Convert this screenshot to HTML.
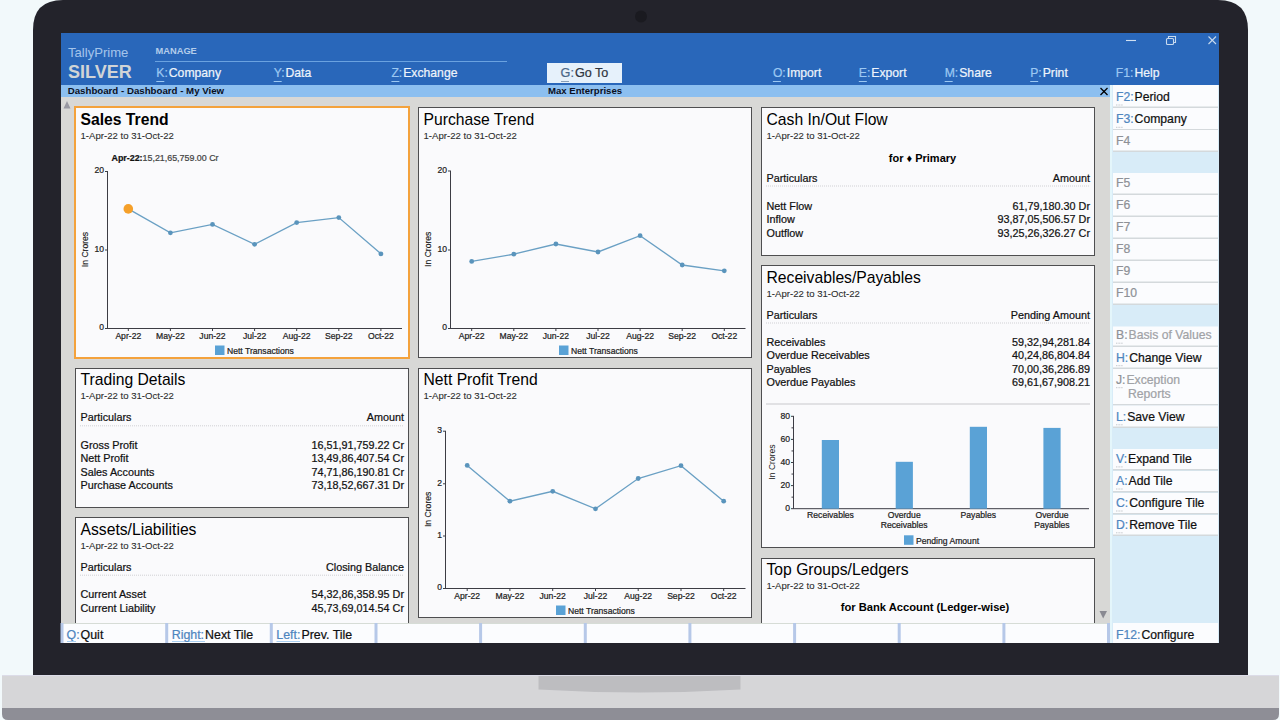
<!DOCTYPE html>
<html><head><meta charset="utf-8"><title>TallyPrime Dashboard</title>
<style>
html,body{margin:0;padding:0;width:1280px;height:720px;overflow:hidden;background:#f2f9fb;}
svg{display:block;font-family:"Liberation Sans",sans-serif;}
</style></head>
<body>
<svg width="1280" height="720" viewBox="0 0 1280 720">

<rect x="0" y="0" width="1280" height="720" fill="#f2f9fb"/>
<path d="M33 675 L33 30 Q33 0 63 0 L1218 0 Q1248 0 1248 30 L1248 675 Z" fill="#23232b"/>
<circle cx="641" cy="16.5" r="6" fill="#1a1a20"/>
<rect x="2" y="675" width="1277" height="33" fill="#d6d6d8" />
<rect x="2" y="675" width="1277" height="1" fill="#dcdce8" />
<path d="M538.5 676 L740.5 676 L740.5 689.5 Q639.5 695.5 538.5 689.5 Z" fill="#bdbdc0"/>
<path d="M2 708 L1279 708 L1279 714 Q1279 720 1273 720 L8 720 Q2 720 2 714 Z" fill="#8e8e96"/>
<rect x="61" y="33" width="1158" height="52" fill="#2967ba" />
<text x="68" y="57" font-size="13.1" fill="#a4c4ea" stroke="#a4c4ea" stroke-width="0.05" >TallyPrime</text>
<text x="68" y="77.5" font-size="18" fill="#d0d4d6" font-weight="bold" >SILVER</text>
<text x="155.5" y="54" font-size="9.3" fill="#b4cdea" font-weight="bold" >MANAGE</text>
<line x1="155" y1="61.5" x2="507" y2="61.5" stroke="#6aa2e0" stroke-width="1.2" />
<text x="156.3" y="77.1" font-size="12.2"><tspan fill="#9cc8f2" stroke="#9cc8f2" stroke-width="0.22">K:</tspan><tspan fill="#eef4fb" stroke="#eef4fb" stroke-width="0.22" dx="1.0">Company</tspan></text>
<line x1="156.3" y1="81.5" x2="164.3" y2="81.5" stroke="#9cc8f2" stroke-width="1" />
<text x="273.7" y="77.1" font-size="12.2"><tspan fill="#9cc8f2" stroke="#9cc8f2" stroke-width="0.22">Y:</tspan><tspan fill="#eef4fb" stroke="#eef4fb" stroke-width="0.22" dx="1.0">Data</tspan></text>
<line x1="273.7" y1="81.5" x2="281.7" y2="81.5" stroke="#9cc8f2" stroke-width="1" />
<text x="391.4" y="77.1" font-size="12.2"><tspan fill="#9cc8f2" stroke="#9cc8f2" stroke-width="0.22">Z:</tspan><tspan fill="#eef4fb" stroke="#eef4fb" stroke-width="0.22" dx="1.0">Exchange</tspan></text>
<line x1="391.4" y1="81.5" x2="399.4" y2="81.5" stroke="#9cc8f2" stroke-width="1" />
<text x="772.9" y="77.1" font-size="12.2"><tspan fill="#9cc8f2" stroke="#9cc8f2" stroke-width="0.22">O:</tspan><tspan fill="#eef4fb" stroke="#eef4fb" stroke-width="0.22" dx="1.0">Import</tspan></text>
<line x1="772.9" y1="81.5" x2="780.9" y2="81.5" stroke="#9cc8f2" stroke-width="1" />
<text x="858.8" y="77.1" font-size="12.2"><tspan fill="#9cc8f2" stroke="#9cc8f2" stroke-width="0.22">E:</tspan><tspan fill="#eef4fb" stroke="#eef4fb" stroke-width="0.22" dx="1.0">Export</tspan></text>
<line x1="858.8" y1="81.5" x2="866.8" y2="81.5" stroke="#9cc8f2" stroke-width="1" />
<text x="944.7" y="77.1" font-size="12.2"><tspan fill="#9cc8f2" stroke="#9cc8f2" stroke-width="0.22">M:</tspan><tspan fill="#eef4fb" stroke="#eef4fb" stroke-width="0.22" dx="1.0">Share</tspan></text>
<line x1="944.7" y1="81.5" x2="952.7" y2="81.5" stroke="#9cc8f2" stroke-width="1" />
<text x="1030.2" y="77.1" font-size="12.2"><tspan fill="#9cc8f2" stroke="#9cc8f2" stroke-width="0.22">P:</tspan><tspan fill="#eef4fb" stroke="#eef4fb" stroke-width="0.22" dx="1.0">Print</tspan></text>
<line x1="1030.2" y1="81.5" x2="1038.2" y2="81.5" stroke="#9cc8f2" stroke-width="1" />
<text x="1115.8" y="77.1" font-size="12.2"><tspan fill="#9cc8f2" stroke="#9cc8f2" stroke-width="0.22">F1:</tspan><tspan fill="#eef4fb" stroke="#eef4fb" stroke-width="0.22" dx="1.0">Help</tspan></text>
<rect x="547" y="63" width="75" height="20" fill="#e6f1fb" />
<text x="560.6" y="77" font-size="12.6"><tspan fill="#4a6688" stroke="#4a6688" stroke-width="0.22">G:</tspan><tspan fill="#2e3440" stroke="#2e3440" stroke-width="0.22" dx="1.0">Go To</tspan></text>
<line x1="561" y1="81.5" x2="569" y2="81.5" stroke="#8aa0b8" stroke-width="1" />
<line x1="1126" y1="40.5" x2="1136" y2="40.5" stroke="#d0e0f2" stroke-width="1.1" />
<rect x="1166.5" y="38.5" width="7" height="6" rx="1" fill="none" stroke="#c8daee" stroke-width="1.1"/>
<path d="M1168.5 38.5 V36.5 H1175.5 V42.5 H1173.5" fill="none" stroke="#c8daee" stroke-width="1.1"/>
<line x1="1208.5" y1="36.5" x2="1216" y2="44" stroke="#c8daee" stroke-width="1.1" />
<line x1="1216" y1="36.5" x2="1208.5" y2="44" stroke="#c8daee" stroke-width="1.1" />
<rect x="61" y="85" width="1049" height="12" fill="#8cbff0" />
<text x="67.7" y="94" font-size="9.7" fill="#0a0f1e" font-weight="bold" >Dashboard - Dashboard - My View</text>
<text x="548" y="93.8" font-size="9.6" fill="#0a0f1e" font-weight="bold" >Max Enterprises</text>
<line x1="1100.5" y1="88" x2="1107.5" y2="95" stroke="#000" stroke-width="1.2" />
<line x1="1107.5" y1="88" x2="1100.5" y2="95" stroke="#000" stroke-width="1.2" />
<rect x="61" y="97" width="1049" height="526" fill="#d8d8d6" />
<path d="M67 101 L70.5 108.5 L63.5 108.5 Z" fill="#9898a2"/>
<path d="M1099.5 611 L1107 611 L1103.2 618.5 Z" fill="#8a8a92"/>
<rect x="1110" y="85" width="109" height="558" fill="#d8ecf8" />
<rect x="1110" y="85" width="2" height="558" fill="#e4f6fb" />
<rect x="1113" y="85" width="105" height="22" fill="#fbfcfe" />
<rect x="1113" y="106.5" width="105" height="1.5" fill="#d4d9dc" />
<text x="1116" y="101" font-size="12.2"><tspan fill="#4f86be" stroke="#4f86be" stroke-width="0.22">F2:</tspan><tspan fill="#101010" stroke="#101010" stroke-width="0.22" dx="1">Period</tspan></text>
<line x1="1116" y1="105" x2="1123" y2="105" stroke="#c4c8cc" stroke-width="1" stroke-dasharray="1 0.6"/>
<rect x="1113" y="108" width="105" height="21.5" fill="#fbfcfe" />
<rect x="1113" y="129.0" width="105" height="1.5" fill="#d4d9dc" />
<text x="1116" y="123.3" font-size="12.2"><tspan fill="#4f86be" stroke="#4f86be" stroke-width="0.22">F3:</tspan><tspan fill="#101010" stroke="#101010" stroke-width="0.22" dx="1">Company</tspan></text>
<line x1="1116" y1="127.3" x2="1123" y2="127.3" stroke="#c4c8cc" stroke-width="1" stroke-dasharray="1 0.6"/>
<rect x="1113" y="130" width="105" height="21" fill="#fbfcfe" />
<rect x="1113" y="150.5" width="105" height="1.5" fill="#d4d9dc" />
<text x="1116" y="145" font-size="12.2" fill="#8e9196" stroke="#8e9196" stroke-width="0.22" >F4</text>
<rect x="1113" y="173" width="105" height="21" fill="#fbfcfe" />
<rect x="1113" y="193.5" width="105" height="1.5" fill="#d4d9dc" />
<text x="1116" y="187.1" font-size="12.2" fill="#8e9196" stroke="#8e9196" stroke-width="0.22" >F5</text>
<rect x="1113" y="195" width="105" height="21" fill="#fbfcfe" />
<rect x="1113" y="215.5" width="105" height="1.5" fill="#d4d9dc" />
<text x="1116" y="209.1" font-size="12.2" fill="#8e9196" stroke="#8e9196" stroke-width="0.22" >F6</text>
<rect x="1113" y="217" width="105" height="21" fill="#fbfcfe" />
<rect x="1113" y="237.5" width="105" height="1.5" fill="#d4d9dc" />
<text x="1116" y="231.1" font-size="12.2" fill="#8e9196" stroke="#8e9196" stroke-width="0.22" >F7</text>
<rect x="1113" y="239" width="105" height="21" fill="#fbfcfe" />
<rect x="1113" y="259.5" width="105" height="1.5" fill="#d4d9dc" />
<text x="1116" y="253.1" font-size="12.2" fill="#8e9196" stroke="#8e9196" stroke-width="0.22" >F8</text>
<rect x="1113" y="261" width="105" height="21" fill="#fbfcfe" />
<rect x="1113" y="281.5" width="105" height="1.5" fill="#d4d9dc" />
<text x="1116" y="275.1" font-size="12.2" fill="#8e9196" stroke="#8e9196" stroke-width="0.22" >F9</text>
<rect x="1113" y="283" width="105" height="21" fill="#fbfcfe" />
<rect x="1113" y="303.5" width="105" height="1.5" fill="#d4d9dc" />
<text x="1116" y="297.1" font-size="12.2" fill="#8e9196" stroke="#8e9196" stroke-width="0.22" >F10</text>
<rect x="1113" y="326.5" width="105" height="19.5" fill="#fbfcfe" />
<rect x="1113" y="345.5" width="105" height="1.5" fill="#d4d9dc" />
<text x="1116" y="339.2" font-size="12.2"><tspan fill="#8e9196" stroke="#8e9196" stroke-width="0.22">B:</tspan><tspan fill="#a0a2a6" stroke="#a0a2a6" stroke-width="0.22" dx="1">Basis of Values</tspan></text>
<line x1="1116" y1="343.2" x2="1123" y2="343.2" stroke="#c4c8cc" stroke-width="1" stroke-dasharray="1 0.6"/>
<rect x="1113" y="347" width="105" height="21" fill="#fbfcfe" />
<rect x="1113" y="367.5" width="105" height="1.5" fill="#d4d9dc" />
<text x="1116" y="361.7" font-size="12.2"><tspan fill="#4f86be" stroke="#4f86be" stroke-width="0.22">H:</tspan><tspan fill="#101010" stroke="#101010" stroke-width="0.22" dx="1">Change View</tspan></text>
<line x1="1116" y1="365.7" x2="1123" y2="365.7" stroke="#c4c8cc" stroke-width="1" stroke-dasharray="1 0.6"/>
<rect x="1113" y="369" width="105" height="35.5" fill="#fbfcfe" />
<rect x="1113" y="404.0" width="105" height="1.5" fill="#d4d9dc" />
<text x="1116" y="383.7" font-size="12.2"><tspan fill="#8e9196" stroke="#8e9196" stroke-width="0.22">J:</tspan><tspan fill="#a0a2a6" stroke="#a0a2a6" stroke-width="0.22" dx="1">Exception</tspan></text>
<text x="1128" y="398.0" font-size="12.2" fill="#a0a2a6" stroke="#a0a2a6" stroke-width="0.22" >Reports</text>
<line x1="1116" y1="387.7" x2="1123" y2="387.7" stroke="#c4c8cc" stroke-width="1" stroke-dasharray="1 0.6"/>
<rect x="1113" y="405.5" width="105" height="21.5" fill="#fbfcfe" />
<rect x="1113" y="426.5" width="105" height="1.5" fill="#d4d9dc" />
<text x="1116" y="420.8" font-size="12.2"><tspan fill="#4f86be" stroke="#4f86be" stroke-width="0.22">L:</tspan><tspan fill="#101010" stroke="#101010" stroke-width="0.22" dx="1">Save View</tspan></text>
<line x1="1116" y1="424.8" x2="1123" y2="424.8" stroke="#c4c8cc" stroke-width="1" stroke-dasharray="1 0.6"/>
<rect x="1113" y="449" width="105" height="20.5" fill="#fbfcfe" />
<rect x="1113" y="469.0" width="105" height="1.5" fill="#d4d9dc" />
<text x="1116" y="462.9" font-size="12.2"><tspan fill="#4f86be" stroke="#4f86be" stroke-width="0.22">V:</tspan><tspan fill="#101010" stroke="#101010" stroke-width="0.22" dx="1">Expand Tile</tspan></text>
<line x1="1116" y1="466.9" x2="1123" y2="466.9" stroke="#c4c8cc" stroke-width="1" stroke-dasharray="1 0.6"/>
<rect x="1113" y="471" width="105" height="20.5" fill="#fbfcfe" />
<rect x="1113" y="491.0" width="105" height="1.5" fill="#d4d9dc" />
<text x="1116" y="485" font-size="12.2"><tspan fill="#4f86be" stroke="#4f86be" stroke-width="0.22">A:</tspan><tspan fill="#101010" stroke="#101010" stroke-width="0.22" dx="1">Add Tile</tspan></text>
<line x1="1116" y1="489" x2="1123" y2="489" stroke="#c4c8cc" stroke-width="1" stroke-dasharray="1 0.6"/>
<rect x="1113" y="493" width="105" height="20.5" fill="#fbfcfe" />
<rect x="1113" y="513.0" width="105" height="1.5" fill="#d4d9dc" />
<text x="1116" y="507" font-size="12.2"><tspan fill="#4f86be" stroke="#4f86be" stroke-width="0.22">C:</tspan><tspan fill="#101010" stroke="#101010" stroke-width="0.22" dx="1">Configure Tile</tspan></text>
<line x1="1116" y1="511" x2="1123" y2="511" stroke="#c4c8cc" stroke-width="1" stroke-dasharray="1 0.6"/>
<rect x="1113" y="515" width="105" height="20" fill="#fbfcfe" />
<rect x="1113" y="534.5" width="105" height="1.5" fill="#d4d9dc" />
<text x="1116" y="528.8" font-size="12.2"><tspan fill="#4f86be" stroke="#4f86be" stroke-width="0.22">D:</tspan><tspan fill="#101010" stroke="#101010" stroke-width="0.22" dx="1">Remove Tile</tspan></text>
<line x1="1116" y1="532.8" x2="1123" y2="532.8" stroke="#c4c8cc" stroke-width="1" stroke-dasharray="1 0.6"/>
<rect x="1113" y="623" width="105" height="20" fill="#fbfcfe" />
<text x="1116" y="638.8" font-size="12.2"><tspan fill="#4f86be" stroke="#4f86be" stroke-width="0.22">F12:</tspan><tspan fill="#101010" stroke="#101010" stroke-width="0.22" dx="1">Configure</tspan></text>
<rect x="75.5" y="107.5" width="333" height="250" fill="#fafafc" stroke="#4e4e50" stroke-width="1"/>
<text x="80.5" y="125.3" font-size="15.7" fill="#000" font-weight="bold" >Sales Trend</text>
<text x="80.5" y="139" font-size="9.6" fill="#2a2a2a" stroke="#2a2a2a" stroke-width="0.08" >1-Apr-22 to 31-Oct-22</text>
<rect x="75" y="107" width="334" height="251" fill="none" stroke="#f4a23c" stroke-width="2"/>
<rect x="418.5" y="107.5" width="333" height="250" fill="#fafafc" stroke="#4e4e50" stroke-width="1"/>
<text x="423.5" y="125.3" font-size="15.7" fill="#000" >Purchase Trend</text>
<text x="423.5" y="139" font-size="9.6" fill="#2a2a2a" stroke="#2a2a2a" stroke-width="0.08" >1-Apr-22 to 31-Oct-22</text>
<rect x="761.5" y="107.5" width="333" height="148" fill="#fafafc" stroke="#4e4e50" stroke-width="1"/>
<text x="766.5" y="125.3" font-size="15.7" fill="#000" >Cash In/Out Flow</text>
<text x="766.5" y="139" font-size="9.6" fill="#2a2a2a" stroke="#2a2a2a" stroke-width="0.08" >1-Apr-22 to 31-Oct-22</text>
<text x="922.5" y="161.5" font-size="11" fill="#000" font-weight="bold" text-anchor="middle" >for &#9830; Primary</text>
<text x="766.5" y="182.2" font-size="10.8" fill="#111" stroke="#111" stroke-width="0.22" >Particulars</text>
<text x="1090" y="182.2" font-size="10.8" fill="#111" stroke="#111" stroke-width="0.22" text-anchor="end" >Amount</text>
<line x1="766" y1="186.0" x2="1090" y2="186.0" stroke="#d0d0d4" stroke-width="1" stroke-dasharray="1 1"/>
<text x="766.5" y="210.0" font-size="10.8" fill="#111" stroke="#111" stroke-width="0.22" >Nett Flow</text>
<text x="1090" y="210.0" font-size="10.8" fill="#111" stroke="#111" stroke-width="0.22" text-anchor="end" >61,79,180.30 Dr</text>
<text x="766.5" y="223.45" font-size="10.8" fill="#111" stroke="#111" stroke-width="0.22" >Inflow</text>
<text x="1090" y="223.45" font-size="10.8" fill="#111" stroke="#111" stroke-width="0.22" text-anchor="end" >93,87,05,506.57 Dr</text>
<text x="766.5" y="236.9" font-size="10.8" fill="#111" stroke="#111" stroke-width="0.22" >Outflow</text>
<text x="1090" y="236.9" font-size="10.8" fill="#111" stroke="#111" stroke-width="0.22" text-anchor="end" >93,25,26,326.27 Cr</text>
<rect x="75.5" y="368.5" width="333" height="139" fill="#fafafc" stroke="#4e4e50" stroke-width="1"/>
<text x="80.5" y="385.3" font-size="15.7" fill="#000" >Trading Details</text>
<text x="80.5" y="399" font-size="9.6" fill="#2a2a2a" stroke="#2a2a2a" stroke-width="0.08" >1-Apr-22 to 31-Oct-22</text>
<text x="80.5" y="421.3" font-size="10.8" fill="#111" stroke="#111" stroke-width="0.22" >Particulars</text>
<text x="404" y="421.3" font-size="10.8" fill="#111" stroke="#111" stroke-width="0.22" text-anchor="end" >Amount</text>
<line x1="80" y1="425.8" x2="404" y2="425.8" stroke="#d0d0d4" stroke-width="1" stroke-dasharray="1 1"/>
<text x="80.5" y="448.8" font-size="10.8" fill="#111" stroke="#111" stroke-width="0.22" >Gross Profit</text>
<text x="404" y="448.8" font-size="10.8" fill="#111" stroke="#111" stroke-width="0.22" text-anchor="end" >16,51,91,759.22 Cr</text>
<text x="80.5" y="462.25" font-size="10.8" fill="#111" stroke="#111" stroke-width="0.22" >Nett Profit</text>
<text x="404" y="462.25" font-size="10.8" fill="#111" stroke="#111" stroke-width="0.22" text-anchor="end" >13,49,86,407.54 Cr</text>
<text x="80.5" y="475.7" font-size="10.8" fill="#111" stroke="#111" stroke-width="0.22" >Sales Accounts</text>
<text x="404" y="475.7" font-size="10.8" fill="#111" stroke="#111" stroke-width="0.22" text-anchor="end" >74,71,86,190.81 Cr</text>
<text x="80.5" y="489.15" font-size="10.8" fill="#111" stroke="#111" stroke-width="0.22" >Purchase Accounts</text>
<text x="404" y="489.15" font-size="10.8" fill="#111" stroke="#111" stroke-width="0.22" text-anchor="end" >73,18,52,667.31 Dr</text>
<rect x="418.5" y="368.5" width="333" height="249" fill="#fafafc" stroke="#4e4e50" stroke-width="1"/>
<text x="423.5" y="385.3" font-size="15.7" fill="#000" >Nett Profit Trend</text>
<text x="423.5" y="399" font-size="9.6" fill="#2a2a2a" stroke="#2a2a2a" stroke-width="0.08" >1-Apr-22 to 31-Oct-22</text>
<rect x="761.5" y="265.5" width="333" height="282" fill="#fafafc" stroke="#4e4e50" stroke-width="1"/>
<text x="766.5" y="283.3" font-size="15.7" fill="#000" >Receivables/Payables</text>
<text x="766.5" y="297" font-size="9.6" fill="#2a2a2a" stroke="#2a2a2a" stroke-width="0.08" >1-Apr-22 to 31-Oct-22</text>
<text x="766.5" y="318.8" font-size="10.8" fill="#111" stroke="#111" stroke-width="0.22" >Particulars</text>
<text x="1090" y="318.8" font-size="10.8" fill="#111" stroke="#111" stroke-width="0.22" text-anchor="end" >Pending Amount</text>
<line x1="766" y1="323.0" x2="1090" y2="323.0" stroke="#d0d0d4" stroke-width="1" stroke-dasharray="1 1"/>
<text x="766.5" y="345.9" font-size="10.8" fill="#111" stroke="#111" stroke-width="0.22" >Receivables</text>
<text x="1090" y="345.9" font-size="10.8" fill="#111" stroke="#111" stroke-width="0.22" text-anchor="end" >59,32,94,281.84</text>
<text x="766.5" y="359.35" font-size="10.8" fill="#111" stroke="#111" stroke-width="0.22" >Overdue Receivables</text>
<text x="1090" y="359.35" font-size="10.8" fill="#111" stroke="#111" stroke-width="0.22" text-anchor="end" >40,24,86,804.84</text>
<text x="766.5" y="372.8" font-size="10.8" fill="#111" stroke="#111" stroke-width="0.22" >Payables</text>
<text x="1090" y="372.8" font-size="10.8" fill="#111" stroke="#111" stroke-width="0.22" text-anchor="end" >70,00,36,286.89</text>
<text x="766.5" y="386.25" font-size="10.8" fill="#111" stroke="#111" stroke-width="0.22" >Overdue Payables</text>
<text x="1090" y="386.25" font-size="10.8" fill="#111" stroke="#111" stroke-width="0.22" text-anchor="end" >69,61,67,908.21</text>
<line x1="766" y1="404" x2="1090" y2="404" stroke="#c8c8cc" stroke-width="1" />
<rect x="75.5" y="517.5" width="333" height="122" fill="#fafafc" stroke="#4e4e50" stroke-width="1"/>
<text x="80.5" y="535.3" font-size="15.7" fill="#000" >Assets/Liabilities</text>
<text x="80.5" y="549" font-size="9.6" fill="#2a2a2a" stroke="#2a2a2a" stroke-width="0.08" >1-Apr-22 to 31-Oct-22</text>
<text x="80.5" y="570.6" font-size="10.8" fill="#111" stroke="#111" stroke-width="0.22" >Particulars</text>
<text x="404" y="570.6" font-size="10.8" fill="#111" stroke="#111" stroke-width="0.22" text-anchor="end" >Closing Balance</text>
<line x1="80" y1="575.2" x2="404" y2="575.2" stroke="#d0d0d4" stroke-width="1" stroke-dasharray="1 1"/>
<text x="80.5" y="598.4" font-size="10.8" fill="#111" stroke="#111" stroke-width="0.22" >Current Asset</text>
<text x="404" y="598.4" font-size="10.8" fill="#111" stroke="#111" stroke-width="0.22" text-anchor="end" >54,32,86,358.95 Dr</text>
<text x="80.5" y="611.85" font-size="10.8" fill="#111" stroke="#111" stroke-width="0.22" >Current Liability</text>
<text x="404" y="611.85" font-size="10.8" fill="#111" stroke="#111" stroke-width="0.22" text-anchor="end" >45,73,69,014.54 Cr</text>
<rect x="761.5" y="558.5" width="333" height="81" fill="#fafafc" stroke="#4e4e50" stroke-width="1"/>
<text x="766.5" y="575.3" font-size="15.7" fill="#000" >Top Groups/Ledgers</text>
<text x="766.5" y="589" font-size="9.6" fill="#2a2a2a" stroke="#2a2a2a" stroke-width="0.08" >1-Apr-22 to 31-Oct-22</text>
<text x="925" y="611.1" font-size="11.2" fill="#000" font-weight="bold" text-anchor="middle" >for Bank Account (Ledger-wise)</text>
<line x1="107.5" y1="171" x2="107.5" y2="328.5" stroke="#3c3c44" stroke-width="1" />
<line x1="107" y1="328.5" x2="402" y2="328.5" stroke="#3c3c44" stroke-width="1" />
<line x1="105" y1="171.5" x2="107" y2="171.5" stroke="#3c3c44" stroke-width="1" />
<text x="104" y="173.4" font-size="8.6" fill="#222" stroke="#222" stroke-width="0.22" text-anchor="end" >20</text>
<line x1="105" y1="250.0" x2="107" y2="250.0" stroke="#3c3c44" stroke-width="1" />
<text x="104" y="251.9" font-size="8.6" fill="#222" stroke="#222" stroke-width="0.22" text-anchor="end" >10</text>
<line x1="105" y1="328.5" x2="107" y2="328.5" stroke="#3c3c44" stroke-width="1" />
<text x="104" y="330.4" font-size="8.6" fill="#222" stroke="#222" stroke-width="0.22" text-anchor="end" >0</text>
<line x1="128.3" y1="328.5" x2="128.3" y2="331" stroke="#3c3c44" stroke-width="1" />
<text x="128.3" y="338.6" font-size="8.6" fill="#222" stroke="#222" stroke-width="0.22" text-anchor="middle" >Apr-22</text>
<line x1="170.4" y1="328.5" x2="170.4" y2="331" stroke="#3c3c44" stroke-width="1" />
<text x="170.4" y="338.6" font-size="8.6" fill="#222" stroke="#222" stroke-width="0.22" text-anchor="middle" >May-22</text>
<line x1="212.5" y1="328.5" x2="212.5" y2="331" stroke="#3c3c44" stroke-width="1" />
<text x="212.5" y="338.6" font-size="8.6" fill="#222" stroke="#222" stroke-width="0.22" text-anchor="middle" >Jun-22</text>
<line x1="254.6" y1="328.5" x2="254.6" y2="331" stroke="#3c3c44" stroke-width="1" />
<text x="254.6" y="338.6" font-size="8.6" fill="#222" stroke="#222" stroke-width="0.22" text-anchor="middle" >Jul-22</text>
<line x1="296.7" y1="328.5" x2="296.7" y2="331" stroke="#3c3c44" stroke-width="1" />
<text x="296.7" y="338.6" font-size="8.6" fill="#222" stroke="#222" stroke-width="0.22" text-anchor="middle" >Aug-22</text>
<line x1="338.8" y1="328.5" x2="338.8" y2="331" stroke="#3c3c44" stroke-width="1" />
<text x="338.8" y="338.6" font-size="8.6" fill="#222" stroke="#222" stroke-width="0.22" text-anchor="middle" >Sep-22</text>
<line x1="380.9" y1="328.5" x2="380.9" y2="331" stroke="#3c3c44" stroke-width="1" />
<text x="380.9" y="338.6" font-size="8.6" fill="#222" stroke="#222" stroke-width="0.22" text-anchor="middle" >Oct-22</text>
<polyline points="128.3,208.9 170.4,232.8 212.5,224.4 254.6,244.3 296.7,222.6 338.8,217.6 380.9,253.8" fill="none" stroke="#6aa0c4" stroke-width="1.35"/>
<circle cx="128.3" cy="208.9" r="4.8" fill="#f5a02a"/>
<circle cx="170.4" cy="232.8" r="2.4" fill="#5a94bc"/>
<circle cx="212.5" cy="224.4" r="2.4" fill="#5a94bc"/>
<circle cx="254.6" cy="244.3" r="2.4" fill="#5a94bc"/>
<circle cx="296.7" cy="222.6" r="2.4" fill="#5a94bc"/>
<circle cx="338.8" cy="217.6" r="2.4" fill="#5a94bc"/>
<circle cx="380.9" cy="253.8" r="2.4" fill="#5a94bc"/>
<text x="0" y="0" font-size="8.6" fill="#222" stroke="#222" stroke-width="0.15" text-anchor="middle" transform="translate(87.5,249.5) rotate(-90)">In Crores</text>
<rect x="215" y="345.5" width="9.5" height="9.5" fill="#5aa2d6" />
<text x="227" y="353.8" font-size="8.6" fill="#222" stroke="#222" stroke-width="0.22" >Nett Transactions</text>
<text x="111.5" y="160.5" font-size="8.9" fill="#111" stroke="#111" stroke-width="0.22" ><tspan font-weight="bold">Apr-22:</tspan><tspan fill="#444" stroke="#444">15,21,65,759.00 Cr</tspan></text>
<line x1="450.5" y1="170.5" x2="450.5" y2="328.5" stroke="#3c3c44" stroke-width="1" />
<line x1="450" y1="328.5" x2="745.5" y2="328.5" stroke="#3c3c44" stroke-width="1" />
<line x1="448" y1="171.0" x2="450" y2="171.0" stroke="#3c3c44" stroke-width="1" />
<text x="447" y="172.9" font-size="8.6" fill="#222" stroke="#222" stroke-width="0.22" text-anchor="end" >20</text>
<line x1="448" y1="250.0" x2="450" y2="250.0" stroke="#3c3c44" stroke-width="1" />
<text x="447" y="251.9" font-size="8.6" fill="#222" stroke="#222" stroke-width="0.22" text-anchor="end" >10</text>
<line x1="448" y1="328.5" x2="450" y2="328.5" stroke="#3c3c44" stroke-width="1" />
<text x="447" y="330.4" font-size="8.6" fill="#222" stroke="#222" stroke-width="0.22" text-anchor="end" >0</text>
<line x1="471.7" y1="328.5" x2="471.7" y2="331" stroke="#3c3c44" stroke-width="1" />
<text x="471.7" y="338.6" font-size="8.6" fill="#222" stroke="#222" stroke-width="0.22" text-anchor="middle" >Apr-22</text>
<line x1="513.8" y1="328.5" x2="513.8" y2="331" stroke="#3c3c44" stroke-width="1" />
<text x="513.8" y="338.6" font-size="8.6" fill="#222" stroke="#222" stroke-width="0.22" text-anchor="middle" >May-22</text>
<line x1="555.9" y1="328.5" x2="555.9" y2="331" stroke="#3c3c44" stroke-width="1" />
<text x="555.9" y="338.6" font-size="8.6" fill="#222" stroke="#222" stroke-width="0.22" text-anchor="middle" >Jun-22</text>
<line x1="598.0" y1="328.5" x2="598.0" y2="331" stroke="#3c3c44" stroke-width="1" />
<text x="598.0" y="338.6" font-size="8.6" fill="#222" stroke="#222" stroke-width="0.22" text-anchor="middle" >Jul-22</text>
<line x1="640.1" y1="328.5" x2="640.1" y2="331" stroke="#3c3c44" stroke-width="1" />
<text x="640.1" y="338.6" font-size="8.6" fill="#222" stroke="#222" stroke-width="0.22" text-anchor="middle" >Aug-22</text>
<line x1="682.2" y1="328.5" x2="682.2" y2="331" stroke="#3c3c44" stroke-width="1" />
<text x="682.2" y="338.6" font-size="8.6" fill="#222" stroke="#222" stroke-width="0.22" text-anchor="middle" >Sep-22</text>
<line x1="724.3" y1="328.5" x2="724.3" y2="331" stroke="#3c3c44" stroke-width="1" />
<text x="724.3" y="338.6" font-size="8.6" fill="#222" stroke="#222" stroke-width="0.22" text-anchor="middle" >Oct-22</text>
<polyline points="471.7,261.4 513.8,254.2 555.9,244 598.0,252 640.1,235.7 682.2,265 724.3,270.8" fill="none" stroke="#6aa0c4" stroke-width="1.35"/>
<circle cx="471.7" cy="261.4" r="2.4" fill="#5a94bc"/>
<circle cx="513.8" cy="254.2" r="2.4" fill="#5a94bc"/>
<circle cx="555.9" cy="244" r="2.4" fill="#5a94bc"/>
<circle cx="598.0" cy="252" r="2.4" fill="#5a94bc"/>
<circle cx="640.1" cy="235.7" r="2.4" fill="#5a94bc"/>
<circle cx="682.2" cy="265" r="2.4" fill="#5a94bc"/>
<circle cx="724.3" cy="270.8" r="2.4" fill="#5a94bc"/>
<text x="0" y="0" font-size="8.6" fill="#222" stroke="#222" stroke-width="0.15" text-anchor="middle" transform="translate(430.5,249.25) rotate(-90)">In Crores</text>
<rect x="559" y="345.5" width="9.5" height="9.5" fill="#5aa2d6" />
<text x="571" y="353.8" font-size="8.6" fill="#222" stroke="#222" stroke-width="0.22" >Nett Transactions</text>
<line x1="445.5" y1="430.7" x2="445.5" y2="588.5" stroke="#3c3c44" stroke-width="1" />
<line x1="445" y1="588.5" x2="745.5" y2="588.5" stroke="#3c3c44" stroke-width="1" />
<line x1="443" y1="431.2" x2="445" y2="431.2" stroke="#3c3c44" stroke-width="1" />
<text x="442" y="433.09999999999997" font-size="8.6" fill="#222" stroke="#222" stroke-width="0.22" text-anchor="end" >3</text>
<line x1="443" y1="483.8" x2="445" y2="483.8" stroke="#3c3c44" stroke-width="1" />
<text x="442" y="485.7" font-size="8.6" fill="#222" stroke="#222" stroke-width="0.22" text-anchor="end" >2</text>
<line x1="443" y1="536.0" x2="445" y2="536.0" stroke="#3c3c44" stroke-width="1" />
<text x="442" y="537.9" font-size="8.6" fill="#222" stroke="#222" stroke-width="0.22" text-anchor="end" >1</text>
<line x1="443" y1="588.5" x2="445" y2="588.5" stroke="#3c3c44" stroke-width="1" />
<text x="442" y="590.4" font-size="8.6" fill="#222" stroke="#222" stroke-width="0.22" text-anchor="end" >0</text>
<line x1="467.2" y1="588.5" x2="467.2" y2="591" stroke="#3c3c44" stroke-width="1" />
<text x="467.2" y="598.6" font-size="8.6" fill="#222" stroke="#222" stroke-width="0.22" text-anchor="middle" >Apr-22</text>
<line x1="509.9" y1="588.5" x2="509.9" y2="591" stroke="#3c3c44" stroke-width="1" />
<text x="509.9" y="598.6" font-size="8.6" fill="#222" stroke="#222" stroke-width="0.22" text-anchor="middle" >May-22</text>
<line x1="552.7" y1="588.5" x2="552.7" y2="591" stroke="#3c3c44" stroke-width="1" />
<text x="552.7" y="598.6" font-size="8.6" fill="#222" stroke="#222" stroke-width="0.22" text-anchor="middle" >Jun-22</text>
<line x1="595.5" y1="588.5" x2="595.5" y2="591" stroke="#3c3c44" stroke-width="1" />
<text x="595.5" y="598.6" font-size="8.6" fill="#222" stroke="#222" stroke-width="0.22" text-anchor="middle" >Jul-22</text>
<line x1="638.2" y1="588.5" x2="638.2" y2="591" stroke="#3c3c44" stroke-width="1" />
<text x="638.2" y="598.6" font-size="8.6" fill="#222" stroke="#222" stroke-width="0.22" text-anchor="middle" >Aug-22</text>
<line x1="681.0" y1="588.5" x2="681.0" y2="591" stroke="#3c3c44" stroke-width="1" />
<text x="681.0" y="598.6" font-size="8.6" fill="#222" stroke="#222" stroke-width="0.22" text-anchor="middle" >Sep-22</text>
<line x1="723.7" y1="588.5" x2="723.7" y2="591" stroke="#3c3c44" stroke-width="1" />
<text x="723.7" y="598.6" font-size="8.6" fill="#222" stroke="#222" stroke-width="0.22" text-anchor="middle" >Oct-22</text>
<polyline points="467.2,465.4 509.9,501.2 552.7,491.3 595.5,508.8 638.2,478.5 681.0,465.7 723.7,501.2" fill="none" stroke="#6aa0c4" stroke-width="1.35"/>
<circle cx="467.2" cy="465.4" r="2.4" fill="#5a94bc"/>
<circle cx="509.9" cy="501.2" r="2.4" fill="#5a94bc"/>
<circle cx="552.7" cy="491.3" r="2.4" fill="#5a94bc"/>
<circle cx="595.5" cy="508.8" r="2.4" fill="#5a94bc"/>
<circle cx="638.2" cy="478.5" r="2.4" fill="#5a94bc"/>
<circle cx="681.0" cy="465.7" r="2.4" fill="#5a94bc"/>
<circle cx="723.7" cy="501.2" r="2.4" fill="#5a94bc"/>
<text x="0" y="0" font-size="8.6" fill="#222" stroke="#222" stroke-width="0.15" text-anchor="middle" transform="translate(431,509.35) rotate(-90)">In Crores</text>
<rect x="556" y="605.5" width="9.5" height="9.5" fill="#5aa2d6" />
<text x="568" y="613.8" font-size="8.6" fill="#222" stroke="#222" stroke-width="0.22" >Nett Transactions</text>
<line x1="793.5" y1="415.8" x2="793.5" y2="508.7" stroke="#3c3c44" stroke-width="1" />
<line x1="793" y1="508.7" x2="1089" y2="508.7" stroke="#3c3c44" stroke-width="1" />
<line x1="791" y1="416.3" x2="793" y2="416.3" stroke="#3c3c44" stroke-width="1" />
<text x="790" y="418.8" font-size="8.6" fill="#222" stroke="#222" stroke-width="0.22" text-anchor="end" >80</text>
<line x1="791" y1="439.4" x2="793" y2="439.4" stroke="#3c3c44" stroke-width="1" />
<text x="790" y="441.9" font-size="8.6" fill="#222" stroke="#222" stroke-width="0.22" text-anchor="end" >60</text>
<line x1="791" y1="462.5" x2="793" y2="462.5" stroke="#3c3c44" stroke-width="1" />
<text x="790" y="465.0" font-size="8.6" fill="#222" stroke="#222" stroke-width="0.22" text-anchor="end" >40</text>
<line x1="791" y1="485.6" x2="793" y2="485.6" stroke="#3c3c44" stroke-width="1" />
<text x="790" y="488.1" font-size="8.6" fill="#222" stroke="#222" stroke-width="0.22" text-anchor="end" >20</text>
<line x1="791" y1="508.7" x2="793" y2="508.7" stroke="#3c3c44" stroke-width="1" />
<text x="790" y="511.2" font-size="8.6" fill="#222" stroke="#222" stroke-width="0.22" text-anchor="end" >0</text>
<line x1="791.5" y1="427.85" x2="793" y2="427.85" stroke="#3c3c44" stroke-width="1" />
<line x1="791.5" y1="450.95" x2="793" y2="450.95" stroke="#3c3c44" stroke-width="1" />
<line x1="791.5" y1="474.05" x2="793" y2="474.05" stroke="#3c3c44" stroke-width="1" />
<line x1="791.5" y1="497.15" x2="793" y2="497.15" stroke="#3c3c44" stroke-width="1" />
<rect x="821.8" y="440" width="17.2" height="68.7" fill="#5aa2d6" />
<rect x="895.7" y="461.8" width="17.2" height="46.9" fill="#5aa2d6" />
<rect x="969.8" y="426.8" width="17.2" height="81.9" fill="#5aa2d6" />
<rect x="1043.4" y="427.9" width="17.2" height="80.8" fill="#5aa2d6" />
<text x="830.5" y="518.4" font-size="8.6" fill="#222" stroke="#222" stroke-width="0.22" text-anchor="middle" >Receivables</text>
<text x="904.2" y="518.4" font-size="8.6" fill="#222" stroke="#222" stroke-width="0.22" text-anchor="middle" >Overdue</text>
<text x="904.2" y="528.4" font-size="8.6" fill="#222" stroke="#222" stroke-width="0.22" text-anchor="middle" >Receivables</text>
<text x="978.3" y="518.4" font-size="8.6" fill="#222" stroke="#222" stroke-width="0.22" text-anchor="middle" >Payables</text>
<text x="1052" y="518.4" font-size="8.6" fill="#222" stroke="#222" stroke-width="0.22" text-anchor="middle" >Overdue</text>
<text x="1052" y="528.4" font-size="8.6" fill="#222" stroke="#222" stroke-width="0.22" text-anchor="middle" >Payables</text>
<text x="0" y="0" font-size="8.6" fill="#222" text-anchor="middle" transform="translate(774.5,462) rotate(-90)">In Crores</text>
<rect x="904" y="535.3" width="9.5" height="9.5" fill="#5aa2d6" />
<text x="916" y="544" font-size="8.6" fill="#222" stroke="#222" stroke-width="0.22" >Pending Amount</text>
<rect x="61" y="623" width="1049" height="20" fill="#fbfcfe" />
<rect x="61" y="623" width="1049" height="1" fill="#d6dcd6" />
<rect x="60.5" y="623" width="3" height="20" fill="#b6c8e8" />
<rect x="165.2" y="623" width="3" height="20" fill="#b6c8e8" />
<rect x="269.8" y="623" width="3" height="20" fill="#b6c8e8" />
<rect x="374.5" y="623" width="3" height="20" fill="#b6c8e8" />
<rect x="479.1" y="623" width="3" height="20" fill="#b6c8e8" />
<rect x="583.8" y="623" width="3" height="20" fill="#b6c8e8" />
<rect x="688.4" y="623" width="3" height="20" fill="#b6c8e8" />
<rect x="793.1" y="623" width="3" height="20" fill="#b6c8e8" />
<rect x="897.7" y="623" width="3" height="20" fill="#b6c8e8" />
<rect x="1002.4" y="623" width="3" height="20" fill="#b6c8e8" />
<rect x="1107.0" y="623" width="3" height="20" fill="#b6c8e8" />
<text x="66.5" y="638.8" font-size="12.4"><tspan fill="#4f86be" stroke="#4f86be" stroke-width="0.22">Q:</tspan><tspan fill="#101010" stroke="#101010" stroke-width="0.22" dx="1.0">Quit</tspan></text>
<line x1="67" y1="641.5" x2="76" y2="641.5" stroke="#a8cef0" stroke-width="1" />
<line x1="172" y1="641.5" x2="205" y2="641.5" stroke="#a8cef0" stroke-width="1" />
<line x1="276.5" y1="641.5" x2="300" y2="641.5" stroke="#a8cef0" stroke-width="1" />
<text x="171.7" y="638.8" font-size="12.4"><tspan fill="#4f86be" stroke="#4f86be" stroke-width="0.22">Right:</tspan><tspan fill="#101010" stroke="#101010" stroke-width="0.22" dx="1.0">Next Tile</tspan></text>
<text x="276.3" y="638.8" font-size="12.4"><tspan fill="#4f86be" stroke="#4f86be" stroke-width="0.22">Left:</tspan><tspan fill="#101010" stroke="#101010" stroke-width="0.22" dx="1.0">Prev. Tile</tspan></text>
</svg>
</body></html>
